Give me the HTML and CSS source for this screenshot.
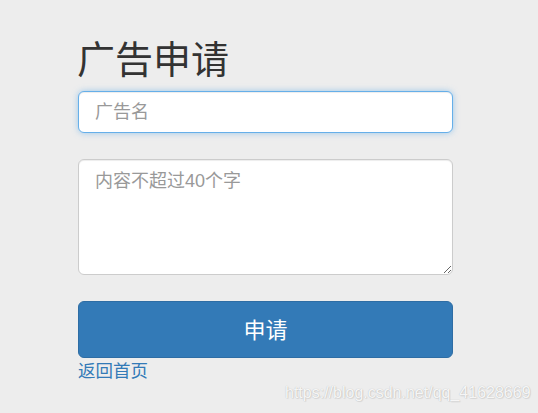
FILE: index.html
```html
<!DOCTYPE html>
<html lang="zh-CN">
<head>
<meta charset="utf-8">
<title>广告申请</title>
<link rel="stylesheet" href="styles.css">
</head>
<body>
<div class="page">
  <form class="apply-form">
    <h1 class="title">广告申请</h1>
    <input class="field field-input is-focused" type="text" placeholder="广告名">
    <textarea class="field field-area" placeholder="内容不超过40个字"></textarea>
    <button class="btn-submit" type="button">申请</button>
    <a class="back-link" href="#">返回首页</a>
  </form>
</div>
<div class="watermark">https://blog.csdn.net/qq_41628669</div>
</body>
</html>
```

FILE: styles.css
```css
html, body {
  margin: 0;
  padding: 0;
}
body {
  background: #ededed;
  font-family: "Liberation Sans", "Noto Sans CJK SC", sans-serif;
  color: #333;
  width: 538px;
  height: 413px;
  overflow: hidden;
  position: relative;
}
.page {
  padding: 0 0 0 78px;
}
.apply-form {
  width: 375px;
  display: flex;
  flex-direction: column;
}
.title {
  font-family: "Noto Sans CJK SC", sans-serif;
  font-weight: 400;
  font-size: 38px;
  line-height: 42px;
  margin: 36px 0 13px -1px;
  color: #333;
}
.field {
  box-sizing: border-box;
  width: 375px;
  border: 1px solid #ccc;
  border-radius: 6px;
  background: #fff;
  font-family: "Liberation Sans", "Noto Sans CJK SC", sans-serif;
  font-size: 18px;
  color: #555;
  padding: 10px 16px;
  margin: 0;
  outline: none;
  box-shadow: inset 0 1px 1px rgba(0,0,0,.075);
}
.field::placeholder {
  color: #999;
}
.field-input {
  height: 42px;
  line-height: 20px;
}
.is-focused {
  border-color: #66afe9;
  box-shadow: inset 0 1px 1px rgba(0,0,0,.075), 0 0 6px rgba(102,175,233,.6);
}
.field-area {
  height: 116px;
  margin-top: 26px;
  line-height: 20px;
  padding-top: 11px;
  resize: vertical;
}
.btn-submit {
  margin-top: 26px;
  height: 57px;
  width: 375px;
  border: 1px solid #2e6da4;
  border-radius: 6px;
  background: #337ab7;
  color: #fff;
  font-family: "Noto Sans CJK SC", sans-serif;
  font-size: 22px;
  line-height: 26px;
  padding: 0 0 3px;
  cursor: pointer;
}
.back-link {
  align-self: flex-start;
  color: #337ab7;
  text-decoration: none;
  font-family: "Noto Sans CJK SC", sans-serif;
  font-size: 17.5px;
  line-height: 24px;
  margin-top: 0;
}
.watermark {
  position: absolute;
  left: 285px;
  top: 384px;
  font-family: "Liberation Sans", sans-serif;
  font-size: 16px;
  color: rgba(255,255,255,.9);
  text-shadow: 0 0 1px rgba(0,0,0,.25), 1px 1px 1px rgba(0,0,0,.08);
  white-space: nowrap;
}
```
